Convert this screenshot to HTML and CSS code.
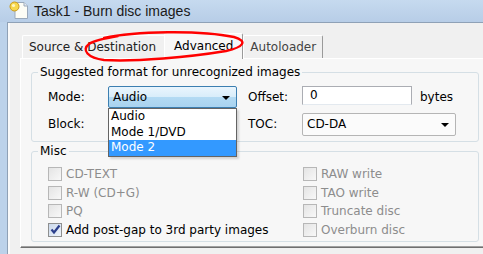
FILE: index.html
```html
<!DOCTYPE html>
<html lang="en">

<head>
    <meta charset="UTF-8">
    <title>Task1 - Burn disc images</title>
    <link rel="stylesheet" href="styles.css">
</head>

<body>
    <div class="window">
        <div class="titlebar">
            <svg class="app-icon" width="20" height="20" viewBox="0 0 20 20">
                <path d="M6 2.5 H15 L18.5 6 V18.5 H6 Z" fill="#fdfdf6" stroke="#9aa9bb" />
                <path d="M15 2.5 V6 H18.5" fill="#e6ebf1" stroke="#9aa9bb" />
                <circle cx="5.5" cy="6.5" r="4.5" fill="#f7d84e" stroke="#c99a1c" />
                <circle cx="4.5" cy="5.5" r="1.6" fill="#fff6c4" />
            </svg>
            <span class="title">Task1 - Burn disc images</span>
        </div>

        <div class="client">
            <div class="tabs">
                <div class="tab">Source &amp; Destination</div>
                <div class="tab active">Advanced</div>
                <div class="tab">Autoloader</div>
            </div>

            <div class="page">
                <fieldset class="group">
                    <legend>Suggested format for unrecognized images</legend>
                    <div class="format-grid">
                        <span class="lbl">Mode:</span>
                        <div class="combo-wrap">
                            <div class="combo focused">Audio<span class="arrow"></span></div>
                            <ul class="droplist">
                                <li>Audio</li>
                                <li>Mode 1/DVD</li>
                                <li class="sel">Mode 2</li>
                            </ul>
                        </div>
                        <span class="lbl lbl-right">Offset:</span>
                        <div class="textbox">0</div>
                        <span class="unit">bytes</span>

                        <span class="lbl">Block:</span>
                        <div class="combo"><span class="arrow"></span></div>
                        <span class="lbl lbl-right">TOC:</span>
                        <div class="combo toc">CD-DA<span class="arrow"></span></div>
                    </div>
                </fieldset>

                <fieldset class="group misc">
                    <legend>Misc</legend>
                    <div class="misc-grid">
                        <label class="check disabled"><span class="box"></span>CD-TEXT</label>
                        <label class="check disabled"><span class="box"></span>RAW write</label>
                        <label class="check disabled"><span class="box"></span>R-W (CD+G)</label>
                        <label class="check disabled"><span class="box"></span>TAO write</label>
                        <label class="check disabled"><span class="box"></span>PQ</label>
                        <label class="check disabled"><span class="box"></span>Truncate disc</label>
                        <label class="check"><span class="box checked">
                            <svg width="11" height="11" viewBox="0 0 11 11">
                                <path d="M1.5 5.5 L4 8.5 L9.5 1.5" fill="none" stroke="#2b3f8c" stroke-width="2.2" />
                            </svg>
                        </span>Add post-gap to 3rd party images</label>
                        <label class="check disabled"><span class="box"></span>Overburn disc</label>
                    </div>
                </fieldset>
            </div>

            <!-- red marker scribble from the screenshot -->
            <svg class="scribble" width="483" height="80" viewBox="0 0 483 80">
                <path d="M104 38 C135 31, 200 30, 234 37 C248 41, 244 47, 226 51 C190 57, 135 62, 104 60 C88 58, 81 50, 89 44 C95 40, 106 38, 118 36"
                    fill="none" stroke="#f00" stroke-width="2.4" stroke-linecap="round" />
            </svg>
        </div>
    </div>
</body>

</html>
```

FILE: styles.css
```css
body {
    margin: 0;
    width: 483px;
    height: 254px;
    overflow: hidden;
    font-family: "DejaVu Sans", sans-serif;
    font-size: 12px;
    color: #000;
}

.window {
    height: 254px;
    background: #bcd2ea;
}

.titlebar {
    height: 22px;
    display: flex;
    align-items: center;
    padding-left: 9px;
    background: linear-gradient(#c6daef, #b7cde7);
}

.app-icon {
    margin-top: -2px;
}

.title {
    margin-left: 5px;
    font-family: "Liberation Sans", Arial, sans-serif;
    font-size: 14px;
    color: #1a1a1a;
}

.client {
    position: relative;
    margin-left: 7px;
    height: 231px;
    border-top: 1px solid #8fa1b6;
    border-left: 1px solid #8fa1b6;
    padding: 10px 0 0 12px;
    background: #f0f0f0;
    box-shadow: inset 2px 0 0 #fafafa;
}

/* tabs */
.tabs {
    display: flex;
    align-items: flex-end;
    height: 25px;
    padding-left: 2px;
}

.tab {
    height: 22px;
    line-height: 22px;
    padding: 0 6px;
    border-top: 1px solid #fff;
    border-left: 1px solid #fff;
    border-right: 1px solid #9a9a9a;
    border-radius: 2px 2px 0 0;
    background: #f0f0f0;
    color: #222;
}

.tab:first-child {
    padding-right: 9px;
}

.tab.active {
    position: relative;
    z-index: 1;
    height: 25px;
    line-height: 24px;
    margin: 0 -1px -1px -2px;
    padding: 0 9px;
    background: #f7f7f7;
    color: #000;
}

.tab:last-child {
    margin-left: 1px;
    color: #444;
}

.page {
    width: 448px;
    padding: 6px 12px 5px 10px;
    border-top: 1px solid #fff;
    border-left: 1px solid #fff;
    border-right: 1px solid #6f6f6f;
    border-bottom: 1px solid #6f6f6f;
    box-shadow: inset -1px -1px 0 #a0a0a0;
    background: #f7f7f7;
}

/* group boxes */
.group {
    margin: 0;
    padding: 7px 12px 6px 6px;
    border: 1px solid #d5dfe5;
    border-radius: 3px;
}

.group legend {
    padding: 0 2px;
    line-height: 14px;
}

.group.misc {
    margin-top: 2px;
    padding-top: 7px;
    padding-bottom: 2px;
}

.format-grid {
    display: grid;
    grid-template-columns: 60px 129px 65px 110px auto;
    grid-template-rows: 22px 22px;
    row-gap: 5px;
    align-items: center;
    margin-left: 10px;
}

.lbl-right {
    padding-left: 11px;
}

.unit {
    padding-left: 8px;
}

.combo-wrap {
    position: relative;
    z-index: 2;
}

.combo {
    position: relative;
    height: 20px;
    line-height: 20px;
    padding-left: 4px;
    border: 1px solid #acacac;
    border-radius: 2px;
    background: linear-gradient(#fdfdfd, #ececec);
}

.combo.focused {
    border-color: #3c7fb1;
    background: linear-gradient(#eaf5fd 0%, #d8edfa 50%, #b3daf3 51%, #a9d3ef 100%);
}

.combo.toc {
    width: 148px;
    height: 21px;
    line-height: 21px;
    background: #fbfbfb;
    border-color: #b5b5b5;
}

.arrow {
    position: absolute;
    right: 6px;
    top: 9px;
    border-left: 4px solid transparent;
    border-right: 4px solid transparent;
    border-top: 4px solid #000;
}

.droplist {
    position: absolute;
    left: 0;
    top: 22px;
    width: 127px;
    margin: 0;
    padding: 0;
    list-style: none;
    border: 1px solid #646464;
    background: #fff;
    box-shadow: 2px 2px 2px rgba(0, 0, 0, 0.15);
}

.droplist li {
    height: 15.5px;
    line-height: 15px;
    padding-left: 2px;
}

.droplist li.sel {
    background: #3399ff;
    color: #fff;
}

.textbox {
    height: 17px;
    line-height: 17px;
    margin-top: -4px;
    padding-left: 7px;
    border: 1px solid #abadb3;
    border-bottom-color: #e3e9ef;
    background: #fff;
}

/* checkboxes */
.misc-grid {
    display: grid;
    grid-template-columns: 255px auto;
    grid-auto-rows: 18.5px;
    align-items: center;
    margin-left: 10px;
}

.check {
    display: flex;
    align-items: center;
    gap: 4px;
}

.check.disabled {
    color: #8d8d8d;
}

.box {
    display: flex;
    align-items: center;
    justify-content: center;
    width: 12px;
    height: 12px;
    border: 1px solid #b7b7b7;
    background: linear-gradient(135deg, #e4e4e4, #f8f8f8);
}

.box.checked {
    border-color: #8e8f8f;
    background: linear-gradient(135deg, #cbd9ec, #eef3fa);
}

.scribble {
    position: absolute;
    left: -8px;
    top: -23px;
    z-index: 3;
    pointer-events: none;
}
```
